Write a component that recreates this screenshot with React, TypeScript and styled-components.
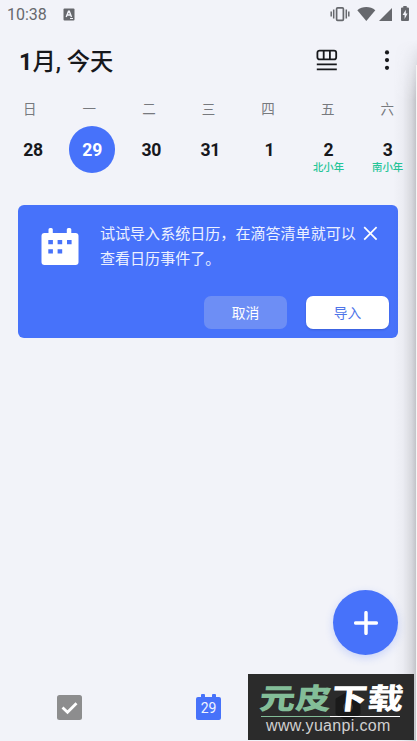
import React from 'react';
import styled, { createGlobalStyle } from 'styled-components';

const BLUE = '#4772fa';

const GlobalStyle = createGlobalStyle`
  * { box-sizing: border-box; }
  html, body { margin: 0; background: #f2f3f9; }
  body { font-family: Roboto, 'Noto Sans CJK SC', sans-serif; overflow: hidden; }
  button { font: inherit; border: 0; padding: 0; }
  svg { display: block; flex: none; }
`;

const Screen = styled.main`
  position: relative;
  width: 417px;
  height: 741px;
  overflow: hidden;
  display: flex;
  flex-direction: column;
  background: #f2f3f9;
  color: #17181c;
`;

const StatusBar = styled.div`
  flex: none;
  height: 28px;
  display: flex;
  align-items: center;
  justify-content: space-between;
  padding: 0 7px;
  color: #66686d;
  font-size: 16px;
  line-height: 28px;
`;

const StatusLeft = styled.div`
  display: flex;
  align-items: center;
  gap: 15px;
  height: 28px;
`;

const Clock = styled.span`
  width: 41px;
  padding-top: 2px;
  white-space: nowrap;
`;

const Header = styled.header`
  flex: none;
  height: 66px;
  display: flex;
  align-items: center;
  padding: 0 24px 2px 19px;
`;

const Title = styled.h1`
  flex: 1;
  margin: 0;
  padding-top: 3px;
  font-size: 23.3px;
  font-weight: 500;
  line-height: 32px;
  white-space: nowrap;
`;

const TitleNumber = styled.span`
  font-weight: 700;
`;

const IconButton = styled.button<{ $gap?: number }>`
  display: flex;
  background: none;
  color: inherit;
  margin-right: ${(p) => p.$gap ?? 0}px;
`;

const WeekRow = styled.div`
  flex: none;
  display: grid;
  grid-template-columns: repeat(7, 1fr);
  height: 30px;
  width: 417px;
  line-height: 30px;
  text-align: center;
  font-size: 13.5px;
  color: #77797e;
  font-weight: 400;
`;

const DateRow = styled.div`
  flex: none;
  display: grid;
  grid-template-columns: repeat(7, 59.1px);
  height: 81px;
  padding: 2px 0 0 3.5px;
`;

const DateCell = styled.div`
  display: flex;
  flex-direction: column;
  align-items: center;
`;

const DateNumber = styled.div<{ $selected?: boolean }>`
  width: 46.5px;
  height: 46.5px;
  border-radius: 50%;
  text-align: center;
  line-height: 48px;
  font-size: 17.6px;
  letter-spacing: -0.3px;
  font-weight: 700;
  color: ${(p) => (p.$selected ? '#fff' : 'inherit')};
  background: ${(p) => (p.$selected ? BLUE : 'transparent')};
`;

const DateNote = styled.span`
  margin-top: -11.5px;
  font-size: 10.4px;
  line-height: 14px;
  font-weight: 500;
  color: #25c598;
  white-space: nowrap;
`;

const ImportCard = styled.section`
  flex: none;
  width: 380px;
  height: 133px;
  margin-left: 18.4px;
  padding: 17px 9.4px 9px 22.6px;
  border-radius: 6px;
  background: ${BLUE};
  color: #fff;
  display: flex;
  flex-direction: column;
  justify-content: space-between;
`;

const CardBody = styled.div`
  display: flex;
  align-items: flex-start;
`;

const CardIcon = styled.div`
  width: 59px;
  padding-top: 5px;
`;

const CardText = styled.p`
  margin: 0;
  width: 263px;
  font-size: 15.05px;
  line-height: 24.5px;
  font-weight: 400;
  color: #edf1ff;
  white-space: nowrap;
`;

const CardClose = styled(IconButton)`
  padding-top: 4px;
`;

const CardActions = styled.div`
  display: flex;
  justify-content: flex-end;
  gap: 19px;
`;

const ActionButton = styled.button<{ $primary?: boolean }>`
  width: 83px;
  height: 33px;
  border-radius: 7px;
  font-size: 13.8px;
  line-height: 34px;
  color: ${(p) => (p.$primary ? '#4f75e8' : '#fff')};
  background: ${(p) => (p.$primary ? '#fff' : '#6d8ef5')};
  box-shadow: ${(p) => (p.$primary ? '0 1px 2px rgba(20, 40, 120, 0.25)' : 'none')};
`;

const AgendaArea = styled.div`
  flex: 1;
`;

const AddButton = styled.button`
  position: absolute;
  right: 18.6px;
  bottom: 86px;
  width: 65px;
  height: 65px;
  border-radius: 50%;
  display: flex;
  align-items: center;
  justify-content: center;
  background: ${BLUE};
  box-shadow: 0 3px 9px rgba(71, 114, 250, 0.24);
`;

const TabBar = styled.nav`
  flex: none;
  height: 67px;
  display: grid;
  grid-template-columns: repeat(3, 1fr);
  justify-items: center;
  align-items: center;
`;

const CalendarTab = styled.div`
  display: flex;
  flex-direction: column;
  align-items: center;
  width: 25px;
  margin-top: -2px;
`;

const CalendarRings = styled.div`
  width: 15px;
  height: 3px;
  display: flex;
  justify-content: space-between;
  &::before, &::after {
    content: '';
    width: 4px;
    height: 4px;
    border-radius: 1px 1px 0 0;
    background: ${BLUE};
  }
`;

const CalendarDay = styled.div`
  width: 25px;
  height: 23px;
  border-radius: 2px;
  background: ${BLUE};
  color: #f0f4ff;
  font-size: 14px;
  line-height: 23px;
  text-align: center;
`;

const EdgeShadow = styled.div`
  position: absolute;
  top: 40px;
  right: 0;
  bottom: 0;
  width: 23px;
  background: linear-gradient(to right, transparent, rgba(70, 70, 75, 0.04) 40%, rgba(70, 70, 75, 0.15) 75%, rgba(70, 70, 75, 0.3));
  mask-image: linear-gradient(to bottom, transparent, #000 60px);
`;

const NextPanel = styled.div`
  position: absolute;
  top: 65px;
  right: 0;
  bottom: 0;
  width: 1px;
  background: #f5f5f5;
`;

const Watermark = styled.aside`
  position: absolute;
  left: 248px;
  top: 674px;
  width: 166px;
  height: 66px;
  background: #2b2b2b;
  overflow: hidden;
`;

const WatermarkHex = styled.svg`
  position: absolute;
  left: 86px;
  top: 17px;
`;

const WatermarkName = styled.div`
  position: relative;
  width: 146px;
  height: 42px;
  margin-left: 12px;
  font-family: 'Noto Sans CJK SC', sans-serif;
  font-size: 29px;
  font-weight: 900;
  line-height: 44px;
  color: #fff;
  white-space: nowrap;
  transform: skewX(-6deg) scaleX(1.24);
  transform-origin: left center;
`;

const WatermarkAccent = styled.span`
  color: #83bd98;
`;

const WatermarkRule = styled.div`
  position: relative;
  width: 139px;
  height: 1px;
  margin-left: 13px;
  background: linear-gradient(to right, #83bd98 50%, #fff 50%);
`;

const WatermarkUrl = styled.div`
  position: relative;
  margin-left: 18px;
  font-family: 'Liberation Sans', sans-serif;
  font-size: 16px;
  letter-spacing: 0.33px;
  line-height: 18px;
  color: #d0d0d0;
  white-space: nowrap;
`;

const weekdays = ['日', '一', '二', '三', '四', '五', '六'];
const dates = [
  { day: 28 },
  { day: 29, selected: true },
  { day: 30 },
  { day: 31 },
  { day: 1 },
  { day: 2, note: '北小年' },
  { day: 3, note: '南小年' },
];

const InputMethodIcon = () => (
  <svg width="12" height="13" viewBox="0 0 12 13">
    <rect x="0.5" y="0.5" width="11" height="12" rx="1" fill="#66686d" />
    <path d="M3.2 9 5.5 3.2h.8L8.5 9M4.2 7h3.3" fill="none" stroke="#f2f3f9" strokeWidth="1.4" />
    <path d="M7 10.5h3" stroke="#f2f3f9" strokeWidth="1" />
  </svg>
);

const StatusIcons = () => (
  <svg width="80" height="16" viewBox="330 6 80 16" fill="#66686d">
    <g fill="none" stroke="#66686d" strokeWidth="1.5">
      <path d="M331.2 11.5v5M333.7 9.5v9M346.3 9.5v9M348.8 11.5v5" />
      <rect x="336.6" y="7.9" width="6.8" height="12.4" rx="1" strokeWidth="1.7" />
    </g>
    <path d="M357.3 10.2c5-4.4 13-4.4 18 0L366.3 21z" />
    <path d="M392 8v13h-13z" />
    <path d="M403.3 6h3.4v1.6h1.3a1 1 0 0 1 1 1V20a1 1 0 0 1-1 1h-6a1 1 0 0 1-1-1V8.6a1 1 0 0 1 1-1h1.3z" />
    <path d="M405.8 9.8 402.6 15h2v4l3-5.6h-1.8z" fill="#f2f3f9" />
  </svg>
);

const ViewIcon = () => (
  <svg width="22" height="22" viewBox="0 0 22 22" fill="none" stroke="#17181c" strokeWidth="1.8">
    <rect x="1.4" y="1.6" width="18.8" height="8.8" rx="2.2" />
    <path d="M7.7 1.6v8.8M13.9 1.6v8.8" />
    <path d="M0.8 15.4h20M0.8 20.4h20" />
  </svg>
);

const MoreIcon = () => (
  <svg width="12" height="22" viewBox="0 0 12 22" fill="#17181c">
    <circle cx="6" cy="3.4" r="2.1" />
    <circle cx="6" cy="11.1" r="2.1" />
    <circle cx="6" cy="18.8" r="2.1" />
  </svg>
);

const CardCalendarIcon = () => (
  <svg width="38" height="38" viewBox="0 0 38 38">
    <rect x="0.5" y="6" width="37" height="32" rx="3" fill="#fff" />
    <path d="M7.5 2.5a1.5 1.5 0 0 1 1.5-1.5h1.3a1.5 1.5 0 0 1 1.5 1.5V8H7.5zM25.8 2.5A1.5 1.5 0 0 1 27.3 1h1.5a1.5 1.5 0 0 1 1.5 1.5V8h-4.5z" fill="#fff" />
    <path d="M7.3 13h4.6v4.3H7.3zM16.6 13h4.6v4.3h-4.6zM26 13h4.6v4.3H26zM7.3 22.2h4.6v4.3H7.3zM16.6 22.2h4.6v4.3h-4.6z" fill={BLUE} />
  </svg>
);

const CloseIcon = () => (
  <svg width="15" height="15" viewBox="0 0 15 15">
    <path d="m1.2 1.2 12.4 12.4M13.6 1.2 1.2 13.6" stroke="#fff" strokeWidth="1.7" />
  </svg>
);

const PlusIcon = () => (
  <svg width="24" height="24" viewBox="0 0 24 24">
    <path d="M12 1.7v20.6M1.7 12h20.6" stroke="#fff" strokeWidth="3.5" strokeLinecap="round" />
  </svg>
);

const TaskIcon = () => (
  <svg width="25" height="25" viewBox="0 0 25 25">
    <rect width="25" height="25" rx="2.5" fill="#8d8d8e" />
    <path d="m5.5 12.5 5 4.7 9-9" fill="none" stroke="#fff" strokeWidth="2.8" />
  </svg>
);

export default function App() {
  return (
    <>
      <GlobalStyle />
      <Screen>
        <StatusBar>
          <StatusLeft>
            <Clock>10:38</Clock>
            <InputMethodIcon />
          </StatusLeft>
          <StatusIcons />
        </StatusBar>
        <Header>
          <Title><TitleNumber>1</TitleNumber>月, 今天</Title>
          <IconButton $gap={43} aria-label="视图"><ViewIcon /></IconButton>
          <IconButton aria-label="更多"><MoreIcon /></IconButton>
        </Header>
        <WeekRow>
          {weekdays.map((name) => <span key={name}>{name}</span>)}
        </WeekRow>
        <DateRow>
          {dates.map(({ day, selected, note }) => (
            <DateCell key={day}>
              <DateNumber $selected={selected}>{day}</DateNumber>
              {note && <DateNote>{note}</DateNote>}
            </DateCell>
          ))}
        </DateRow>
        <ImportCard>
          <CardBody>
            <CardIcon><CardCalendarIcon /></CardIcon>
            <CardText>试试导入系统日历，在滴答清单就可以<br />查看日历事件了。</CardText>
            <CardClose aria-label="关闭"><CloseIcon /></CardClose>
          </CardBody>
          <CardActions>
            <ActionButton>取消</ActionButton>
            <ActionButton $primary>导入</ActionButton>
          </CardActions>
        </ImportCard>
        <AgendaArea />
        <TabBar>
          <TaskIcon />
          <CalendarTab>
            <CalendarRings />
            <CalendarDay>29</CalendarDay>
          </CalendarTab>
        </TabBar>
        <EdgeShadow />
        <NextPanel />
        <AddButton aria-label="添加"><PlusIcon /></AddButton>
        <Watermark>
          <WatermarkHex width="28" height="32" viewBox="0 0 28 32">
            <path d="M14 2 25 8.5v14L14 29 3 22.5v-14z" fill="#1a1a1a" stroke="#1a1a1a" strokeWidth="3" strokeLinejoin="round" />
            <circle cx="14" cy="16" r="5" fill="#333" />
          </WatermarkHex>
          <WatermarkName><WatermarkAccent>元皮</WatermarkAccent>下载</WatermarkName>
          <WatermarkRule />
          <WatermarkUrl>www.yuanpi.com</WatermarkUrl>
        </Watermark>
      </Screen>
    </>
  );
}
